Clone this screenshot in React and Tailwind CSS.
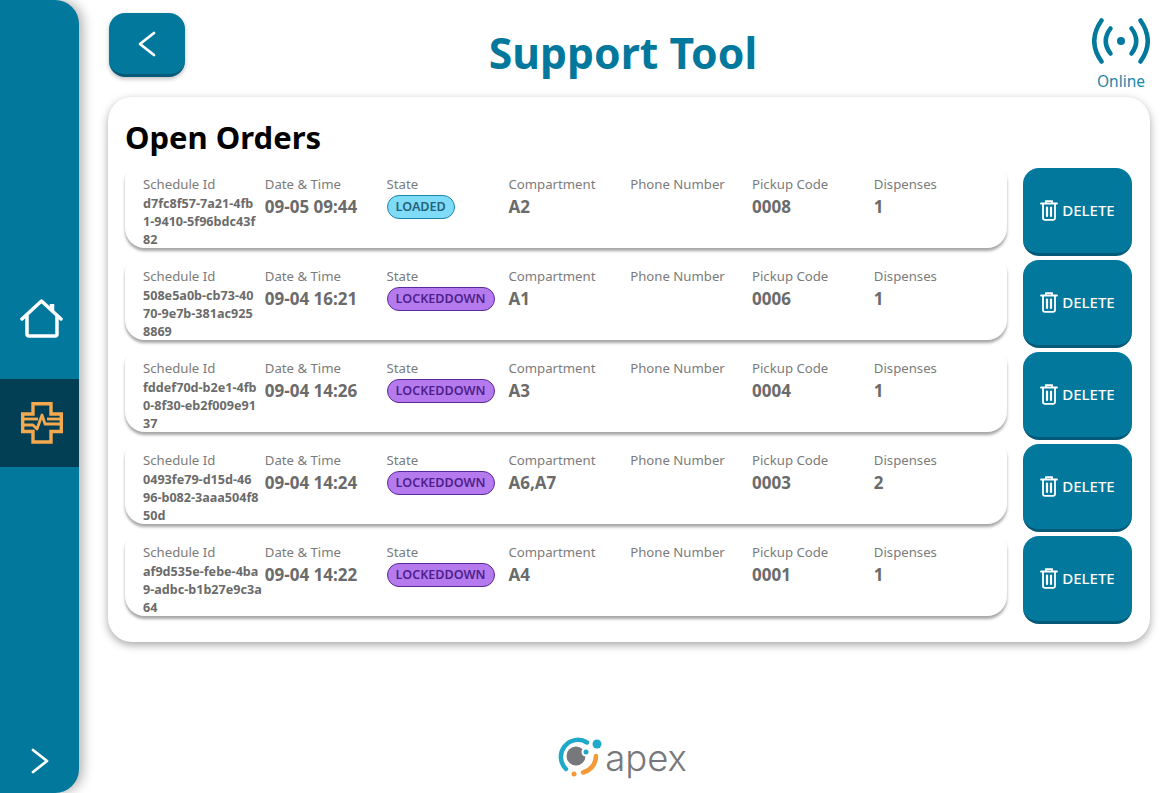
import React from "react";

const orders = [
  { id: ["d7fc8f57-7a21-4fb", "1-9410-5f96bdc43f", "82"], date: "09-05 09:44", state: "LOADED", comp: "A2", code: "0008", disp: "1" },
  { id: ["508e5a0b-cb73-40", "70-9e7b-381ac925", "8869"], date: "09-04 16:21", state: "LOCKEDDOWN", comp: "A1", code: "0006", disp: "1" },
  { id: ["fddef70d-b2e1-4fb", "0-8f30-eb2f009e91", "37"], date: "09-04 14:26", state: "LOCKEDDOWN", comp: "A3", code: "0004", disp: "1" },
  { id: ["0493fe79-d15d-46", "96-b082-3aaa504f8", "50d"], date: "09-04 14:24", state: "LOCKEDDOWN", comp: "A6,A7", code: "0003", disp: "2" },
  { id: ["af9d535e-febe-4ba", "9-adbc-b1b27e9c3a", "64"], date: "09-04 14:22", state: "LOCKEDDOWN", comp: "A4", code: "0001", disp: "1" },
];

const Chevron = ({ left }) => (
  <svg width="20" height="26" viewBox="0 0 20 26" fill="none" stroke="white" strokeWidth="2.8" strokeLinecap="round" strokeLinejoin="round">
    <path d={left ? "M17 2 L3 13 L17 24" : "M3 2 L17 13 L3 24"} />
  </svg>
);

const HomeIcon = () => (
  <svg width="44" height="40" viewBox="0 0 44 40" fill="none" stroke="white" strokeWidth="3.5" strokeLinecap="round" strokeLinejoin="round">
    <path d="M2 20 L21.5 2 L41 20" />
    <path d="M7 17 V35 Q7 37 9 37 H35 Q37 37 37 35 V17" />
    <path d="M32 5 V12" strokeWidth="4.5" strokeLinecap="butt" />
  </svg>
);

const HealthIcon = () => (
  <svg width="42" height="42" viewBox="0 0 42 42" fill="none" stroke="#f5a94e" strokeWidth="3.4">
    <path d="M12 1.7 H30 V12 H40.3 V29.5 H30 V40 H12 V29.5 H1.7 V12 H12 Z" />
    <path d="M1.7 17 H17" strokeWidth="2.8" />
    <path d="M1.7 23 H12 L16 27 L21 13 L24 22 H40.3" strokeWidth="2.8" strokeLinejoin="round" />
    <path d="M26 17 H40.3" strokeWidth="2.8" />
  </svg>
);

const SignalIcon = () => (
  <svg width="58" height="46" viewBox="0 0 58 46" fill="none" stroke="#02789c" strokeWidth="4.5" strokeLinecap="round">
    <circle cx="29" cy="23" r="4" fill="#02789c" stroke="none" />
    <path d="M18.5 10.5 Q9 23 18.5 35.5" />
    <path d="M39.5 10.5 Q49 23 39.5 35.5" />
    <path d="M9.5 2.5 Q-5 23 9.5 43.5" />
    <path d="M48.5 2.5 Q63 23 48.5 43.5" />
  </svg>
);

const TrashIcon = () => (
  <svg width="18" height="21" viewBox="0 0 18 21" fill="none" stroke="white" strokeWidth="1.8" strokeLinecap="round">
    <path d="M1 3.5 H17" />
    <path d="M6 3 V1.2 H12 V3" />
    <path d="M3 4 V18 Q3 19.8 5 19.8 H13 Q15 19.8 15 18 V4" />
    <path d="M7 7.5 V16" strokeWidth="2.2" />
    <path d="M11 7.5 V16" strokeWidth="2.2" />
  </svg>
);

const ApexLogo = () => (
  <div className="flex items-center">
    <svg width="46" height="42" viewBox="0 0 46 42" fill="none">
      <path d="M30 6.5 A17 17 0 0 0 9 33" stroke="#1fa9c9" strokeWidth="4.5" strokeLinecap="round" />
      <path d="M39 20 A17 17 0 0 1 26 36.5" stroke="#f29a38" strokeWidth="4.5" strokeLinecap="round" />
      <circle cx="19" cy="20" r="9.5" fill="#77787b" />
      <circle cx="29" cy="16" r="4.5" fill="white" />
      <circle cx="29" cy="16" r="2.5" fill="#1fa9c9" />
      <circle cx="40" cy="8" r="4.5" fill="#1fa9c9" />
      <circle cx="17" cy="38" r="2.5" fill="#f29a38" />
    </svg>
    <span className="font-['Inter',sans-serif] text-[36.5px] leading-none font-light text-[#77787b] ml-[2px] mt-[2px]">apex</span>
  </div>
);

const Field = ({ label, children }) => (
  <div className="w-[121.8px] shrink-0">
    <div className="text-[13.2px] leading-[18px] text-[#7b7b7b] whitespace-nowrap">{label}</div>
    {children}
  </div>
);

const Value = ({ children }) => (
  <div className="mt-[1px] text-[17px] leading-[26px] font-bold text-[#6b6b6b] whitespace-nowrap">{children}</div>
);

const StateBadge = ({ state }) => {
  const loaded = state === "LOADED";
  return (
    <span
      className={`inline-block mt-[2px] h-[24px] rounded-full border px-[8px] text-[12.6px] leading-[22px] font-semibold ${
        loaded ? "bg-[#7fdcf8] border-[#1b86a8] text-[#27617a]" : "bg-[#b57bee] border-[#5b2a99] text-[#4f1f8c]"
      }`}
    >
      {state}
    </span>
  );
};

const OrderRow = ({ order }) => (
  <div className="flex h-[92px]">
    <div className="w-[882px] h-[80px] rounded-b-[20px] rounded-t-[12px] bg-white pl-[18px] pt-[7px] flex shadow-[0_3px_3px_rgba(0,0,0,0.35)] overflow-hidden">
      <Field label="Schedule Id">
        <div className="mt-[2px] text-[12.6px] leading-[18px] font-bold text-[#6b6b6b] whitespace-nowrap">
          {order.id.map((line) => (
            <div key={line}>{line}</div>
          ))}
        </div>
      </Field>
      <Field label="Date & Time"><Value>{order.date}</Value></Field>
      <Field label="State"><StateBadge state={order.state} /></Field>
      <Field label="Compartment"><Value>{order.comp}</Value></Field>
      <Field label="Phone Number"><Value></Value></Field>
      <Field label="Pickup Code"><Value>{order.code}</Value></Field>
      <Field label="Dispenses"><Value>{order.disp}</Value></Field>
    </div>
    <button className="ml-[16px] w-[109px] h-[88px] rounded-[16px] bg-[#02789c] border-b-[3px] border-[#025a78] flex items-center justify-center gap-[4px] text-white text-[15px] font-medium">
      <TrashIcon />
      DELETE
    </button>
  </div>
);

export default function App() {
  return (
    <div className="flex h-[793px] w-[1162px] overflow-hidden bg-white font-['Noto_Sans',sans-serif]">
      <aside className="w-[79px] shrink-0 rounded-r-[24px] bg-[#02789c] shadow-[4px_0_12px_rgba(0,0,0,0.3)] flex flex-col pt-[291px] pb-[19px]">
        <div className="h-[88px] flex items-center justify-center pl-[4px] pb-[32px]"><HomeIcon /></div>
        <div className="h-[88px] flex items-center justify-center pl-[4px] bg-[#033f54]"><HealthIcon /></div>
        <div className="mt-auto flex justify-center">
          <Chevron />
        </div>
      </aside>

      <main className="flex-1 pl-[29px] pr-[12px] flex flex-col">
        <header className="relative h-[97px] pt-[13px]">
          <button className="ml-[1px] w-[76px] h-[64px] rounded-[16px] bg-[#02789c] border-b-[3px] border-[#025a78] shadow-[0_2px_4px_rgba(0,0,0,0.25)] flex items-center justify-center">
            <Chevron left />
          </button>
          <h1 className="absolute left-0 right-0 top-[23px] text-center pr-[12px] text-[42.7px] leading-[60px] font-bold text-[#02789c]">Support Tool</h1>
          <div className="absolute right-0 top-[18px] flex flex-col items-center">
            <SignalIcon />
            <span className="text-[15.5px] leading-[22px] mt-[6px] text-[#1b86a8]">Online</span>
          </div>
        </header>

        <section className="h-[545px] rounded-[24px] bg-white pl-[17px] pt-[20px] shadow-[0_3px_8px_rgba(0,0,0,0.35)]">
          <h2 className="text-[31px] leading-[40px] font-bold text-black mb-[11px]">Open Orders</h2>
          {orders.map((order) => (
            <OrderRow key={order.code} order={order} />
          ))}
        </section>

        <div className="mt-[94px] flex justify-center pr-[14px]">
          <ApexLogo />
        </div>
      </main>
    </div>
  );
}
